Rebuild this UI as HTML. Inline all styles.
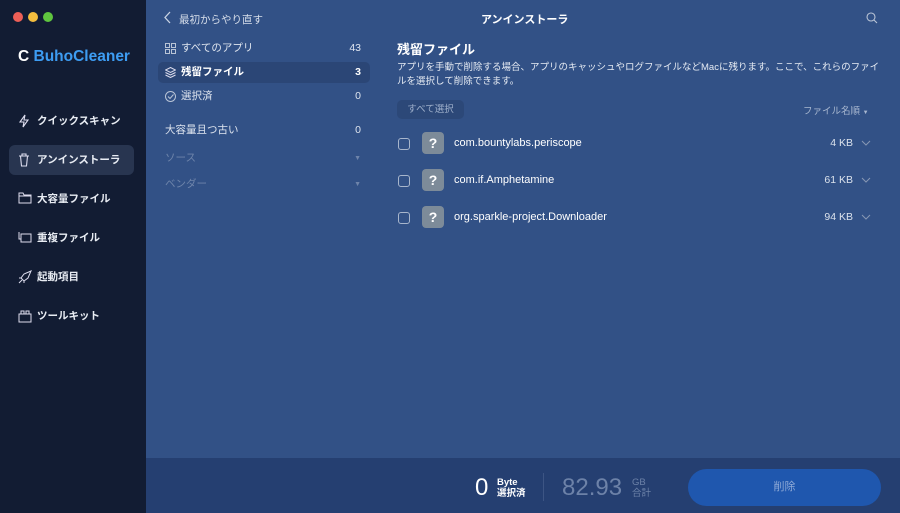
<!DOCTYPE html><html><head><meta charset="utf-8"><style>
*{margin:0;padding:0;box-sizing:border-box}
body{width:900px;height:513px;overflow:hidden;font-family:"Liberation Sans","Noto Sans CJK JP",sans-serif;background:#325186;position:relative;color:#fff}
.sb{position:absolute;left:0;top:0;width:146px;height:513px;background:#121c33}
.dot{position:absolute;top:12px;width:10px;height:10px;border-radius:50%}
.logo{position:absolute;left:18px;top:48px;font-size:15.5px;font-weight:bold;color:#3d9cf2}
.nav{position:absolute;left:9px;width:125px;height:30px;border-radius:6px;font-size:10.5px;font-weight:bold;color:#e8ecf3;padding-left:28px;line-height:30px}
.nav svg{position:absolute;left:9px;top:8px}
.nav.a{background:#283550}
.t{position:absolute;font-size:10.5px}
.row{position:absolute;left:158px;width:212px;height:21px;font-size:10.5px;line-height:21px;padding-left:23px;color:#dfe5ef}
.row b{position:absolute;right:9px;font-weight:normal}
.row svg{position:absolute;left:7px;top:5px}
.it{position:absolute;left:398px;width:475px;height:24px}
.cb{position:absolute;left:0;top:6px;width:12px;height:12px;border:1px solid #a8b6cc;border-radius:3px}
.q{position:absolute;left:24px;top:0;width:22px;height:22px;border-radius:4px;background:#7d8b99;color:#fff;font-size:14px;font-weight:bold;text-align:center;line-height:22px}
.nm{position:absolute;left:56px;top:5px;font-size:11px}
.sz{position:absolute;right:20px;top:5px;font-size:10.5px;color:#dbe2ec}
.ch{position:absolute;right:2px;top:8px}
</style></head><body>
<div class="sb">
<div class="dot" style="left:13px;background:#ed5f57"></div><div class="dot" style="left:28px;background:#f4bd3e"></div><div class="dot" style="left:43px;background:#5fc53f"></div>
<div class="logo"><span style="color:#fff">C</span> BuhoCleaner</div>
<div class="nav" style="top:106px"><svg width="12" height="14" viewBox="0 0 12 14"><path d="M7 1L2 8h4l-1 5 5-7H6z" fill="none" stroke="#dde" stroke-width="1.1"/></svg>クイックスキャン</div>
<div class="nav a" style="top:145px"><svg width="12" height="14" viewBox="0 0 12 14"><path d="M1 3h10M4 3V1h4v2M2.5 3l1 10h5l1-10" fill="none" stroke="#dde" stroke-width="1.1"/></svg>アンインストーラ</div>
<div class="nav" style="top:184px"><svg width="14" height="12" viewBox="0 0 14 12"><path d="M1 1h4l1 2h7v8H1z M1 4h12" fill="none" stroke="#dde" stroke-width="1"/></svg>大容量ファイル</div>
<div class="nav" style="top:223px"><svg width="14" height="12" viewBox="0 0 14 12"><path d="M1 1v7h2 M3 3h10v8H3z" fill="none" stroke="#dde" stroke-width="1"/></svg>重複ファイル</div>
<div class="nav" style="top:262px"><svg width="14" height="14" viewBox="0 0 14 14"><path d="M13 1L6 4 3 8l3 3 4-3zM4 10l-3 3M3 8H1M6 11v2" fill="none" stroke="#dde" stroke-width="1"/></svg>起動項目</div>
<div class="nav" style="top:301px"><svg width="14" height="14" viewBox="0 0 14 14"><path d="M1 5h12v8H1zM3 5V2h3v3M8 5V2h3v3" fill="none" stroke="#dde" stroke-width="1"/></svg>ツールキット</div>
</div>
<svg style="position:absolute;left:164px;top:11px" width="8" height="13"><path d="M6 1L1 6.5 6 12" fill="none" stroke="#c9d3e3" stroke-width="1.3"/></svg>
<div class="t" style="left:179px;top:12px;color:#d7deea">最初からやり直す</div>
<div class="t" style="left:481px;top:11px;font-weight:bold;font-size:11px">アンインストーラ</div>
<svg style="position:absolute;left:866px;top:12px" width="12" height="12"><circle cx="5" cy="5" r="4" fill="none" stroke="#b9c4d6" stroke-width="1.1"/><path d="M8 8l3 3" stroke="#b9c4d6" stroke-width="1.1"/></svg>
<div class="row" style="top:38px"><svg width="11" height="11"><path d="M.5.5h4v4h-4zM6.5.5h4v4h-4zM.5 6.5h4v4h-4zM6.5 6.5h4v4h-4z" fill="none" stroke="#b9c4d6"/></svg>すべてのアプリ<b>43</b></div>
<div class="row" style="top:62px;background:#2b4676;border-radius:5px;font-weight:bold;color:#fff"><svg width="11" height="11"><path d="M5.5.5l5 2.5-5 2.5-5-2.5zM.5 5.5l5 2.5 5-2.5M.5 8l5 2.5 5-2.5" fill="none" stroke="#dde"/></svg>残留ファイル<b style="font-weight:bold">3</b></div>
<div class="row" style="top:86px"><svg width="11" height="11"><circle cx="5.5" cy="5.5" r="5" fill="none" stroke="#b9c4d6"/><path d="M3 5.5l2 2 3.5-4" fill="none" stroke="#b9c4d6"/></svg>選択済<b>0</b></div>
<div class="row" style="top:120px;padding-left:7px">大容量且つ古い<b>0</b></div>
<div class="row" style="top:148px;padding-left:7px;color:#6e84aa">ソース<b style="font-size:7px">▼</b></div>
<div class="row" style="top:174px;padding-left:7px;color:#6e84aa">ベンダー<b style="font-size:7px">▼</b></div>
<div class="t" style="left:397px;top:39px;font-size:13px;font-weight:bold">残留ファイル</div>
<div class="t" style="left:397px;top:61px;font-size:9.5px;line-height:14px;color:#e6ebf3;width:490px">アプリを手動で削除する場合、アプリのキャッシュやログファイルなどMacに残ります。ここで、これらのファイルを選択して削除できます。</div>
<div style="position:absolute;left:397px;top:100px;width:67px;height:19px;border-radius:5px;background:#2c4878;color:#9fb0cb;font-size:9.5px;line-height:19px;text-align:center">すべて選択</div>
<div class="t" style="left:803px;top:103px;font-size:9.5px;color:#a9b8d0">ファイル名順 <span style="font-size:6px">▼</span></div>
<div class="it" style="top:132px"><div class="cb"></div><div class="q">?</div><div class="nm">com.bountylabs.periscope</div><div class="sz">4 KB</div><svg class="ch" width="10" height="6"><path d="M1 1l4 4 4-4" fill="none" stroke="#8797b3"/></svg></div>
<div class="it" style="top:169px"><div class="cb"></div><div class="q">?</div><div class="nm">com.if.Amphetamine</div><div class="sz">61 KB</div><svg class="ch" width="10" height="6"><path d="M1 1l4 4 4-4" fill="none" stroke="#8797b3"/></svg></div>
<div class="it" style="top:206px"><div class="cb"></div><div class="q">?</div><div class="nm">org.sparkle-project.Downloader</div><div class="sz">94 KB</div><svg class="ch" width="10" height="6"><path d="M1 1l4 4 4-4" fill="none" stroke="#8797b3"/></svg></div>
<div style="position:absolute;left:146px;top:458px;width:754px;height:55px;background:#253f71"></div>
<div class="t" style="left:475px;top:474px;font-size:24px">0</div>
<div class="t" style="left:497px;top:477px;font-size:9.5px;line-height:11px;font-weight:bold">Byte<br>選択済</div>
<div style="position:absolute;left:543px;top:473px;width:1px;height:28px;background:#3d5584"></div>
<div class="t" style="left:562px;top:474px;font-size:24px;color:#6d82a8">82.93</div>
<div class="t" style="left:632px;top:477px;font-size:9.5px;line-height:11px;color:#6d82a8">GB<br>合計</div>
<div style="position:absolute;left:688px;top:469px;width:193px;height:37px;border-radius:19px;background:#1f57ae;color:#8ea9d6;font-size:11px;text-align:center;line-height:37px">削除</div>
</body></html>
